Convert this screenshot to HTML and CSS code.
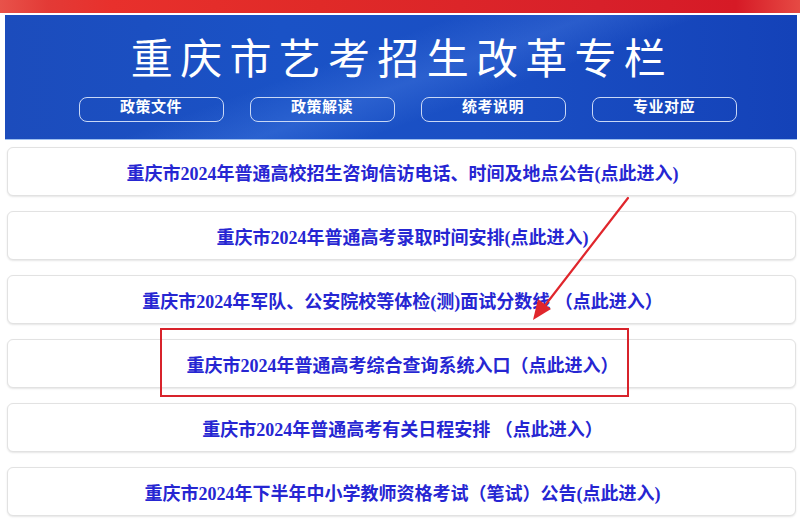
FILE: index.html
```html
<!DOCTYPE html>
<html lang="zh-CN">
<head>
<meta charset="utf-8">
<title>重庆市艺考招生改革专栏</title>
<link rel="stylesheet" href="styles.css">
</head>
<body>
<div class="page">
  <div class="topbar"></div>
  <header class="banner">
    <h1 class="title">重庆市艺考招生改革专栏</h1>
    <nav class="tabs">
      <a class="tab">政策文件</a>
      <a class="tab">政策解读</a>
      <a class="tab">统考说明</a>
      <a class="tab">专业对应</a>
    </nav>
  </header>
  <main class="list">
    <a class="card">重庆市2024年普通高校招生咨询信访电话、时间及地点公告(点此进入)</a>
    <a class="card">重庆市2024年普通高考录取时间安排(点此进入)</a>
    <a class="card">重庆市2024年军队、公安院校等体检(测)面试分数线 （点此进入）</a>
    <a class="card">重庆市2024年普通高考综合查询系统入口（点此进入）</a>
    <a class="card">重庆市2024年普通高考有关日程安排 （点此进入）</a>
    <a class="card">重庆市2024年下半年中小学教师资格考试（笔试）公告(点此进入)</a>
  </main>
  <div class="highlight"></div>
  <svg class="arrow" width="800" height="526" viewBox="0 0 800 526">
    <line x1="628" y1="198" x2="543" y2="308" stroke="#e0262c" stroke-width="2.2" stroke-linecap="round"/>
    <polygon points="533,320 538,299 551,309" fill="#e0262c"/>
  </svg>
</div>
</body>
</html>
```
FILE: styles.css
```css
html, body {
  margin: 0;
  padding: 0;
  background: #ffffff;
}
.page {
  position: relative;
  width: 800px;
  height: 526px;
  overflow: hidden;
  font-family: "Liberation Serif", "Noto Sans CJK SC", serif;
}
.topbar {
  height: 13px;
  background: linear-gradient(90deg, #e8524a 0%, #e33a36 6%, #e8302c 14%, #e02a28 40%, #d8202a 75%, #d61a26 92%, #e64a44 100%);
}
.banner {
  margin: 2px 3px 0 5px;
  height: 124px;
  border-bottom: 1px solid #9fc0ef;
  background:
    linear-gradient(160deg, rgba(255,255,255,0) 40%, rgba(120,170,255,0.18) 52%, rgba(255,255,255,0) 62%),
    linear-gradient(90deg, #1c4cbc 0%, #1a52c6 35%, #1a4fc4 60%, #1442b8 100%);
  display: flex;
  flex-direction: column;
  align-items: center;
}
.title {
  margin: 15px 0 0 2px;
  font-family: "Noto Sans CJK SC", sans-serif;
  font-weight: 400;
  font-size: 42px;
  line-height: 52px;
  letter-spacing: 7.3px;
  color: #ffffff;
}
.tabs {
  margin: 15px 0 0 13px;
  display: flex;
  gap: 26px;
}
.tab {
  width: 143px;
  height: 23px;
  border: 1.5px solid #c9d8f6;
  border-radius: 8px;
  color: #ffffff;
  font-family: "Noto Sans CJK SC", serif;
  font-weight: 700;
  font-size: 15px;
  line-height: 16px;
  text-align: center;
  letter-spacing: 0.5px;
}
.list {
  padding: 7px 4px 0 7px;
  display: flex;
  flex-direction: column;
  gap: 15px;
}
.card {
  height: 47px;
  border: 1px solid #e2e2e2;
  border-radius: 6px;
  box-shadow: 0 1px 2px rgba(0,0,0,0.10);
  background: #ffffff;
  display: flex;
  align-items: center;
  justify-content: center;
  color: #2626d2;
  font-weight: 700;
  font-size: 18px;
  padding-left: 2px;
}
.highlight {
  position: absolute;
  left: 160px;
  top: 328px;
  width: 465px;
  height: 65px;
  border: 2px solid #d8232b;
}
.arrow {
  position: absolute;
  left: 0;
  top: 0;
  pointer-events: none;
}
```
